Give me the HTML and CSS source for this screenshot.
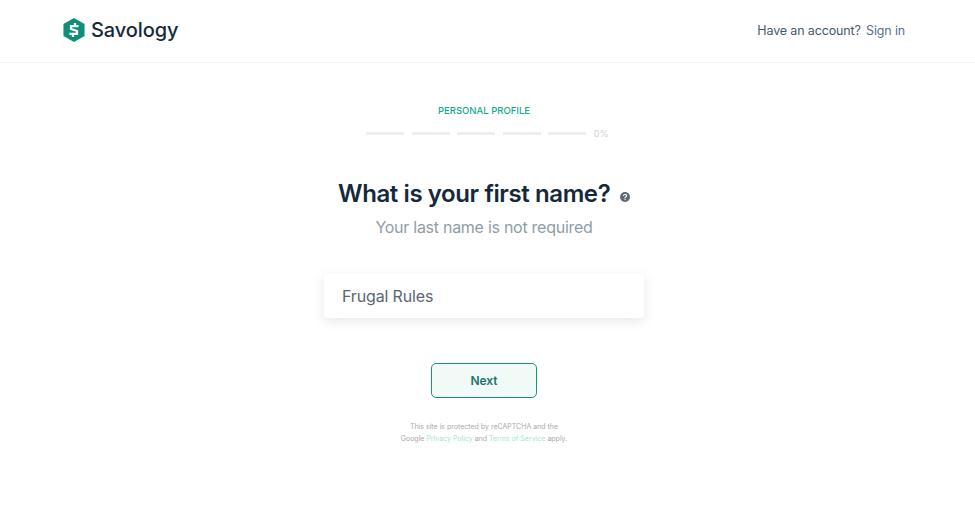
FILE: index.html
```html
<!DOCTYPE html>
<html>
<head>
    <link rel="stylesheet" href="styles.css">
</head>
<body>
    <header class="topbar">
        <a class="brand" href="#">
            <svg class="brand-mark" width="22" height="24" viewBox="0 0 22 24">
                <path d="M11 0.8 L20.8 6.4 V17.6 L11 23.2 L1.2 17.6 V6.4 Z" fill="#0f8f77" stroke="#0f8f77" stroke-width="1.5" stroke-linejoin="round"></path>
                <path d="M15.6 8.2 H8 V11 L14 13 V15.8 H6.4" fill="none" stroke="#fff" stroke-width="2.2"></path>
                <path d="M12 5 V7.5 M10 16.5 V19" fill="none" stroke="#fff" stroke-width="2.2"></path>
            </svg>
            <span class="brand-name">Savology</span>
        </a>
        <div class="account">Have an account? <a href="#">Sign in</a></div>
    </header>

    <main class="step">
        <div class="step-label">PERSONAL PROFILE</div>
        <div class="progress">
            <span class="progress-seg"></span>
            <span class="progress-seg"></span>
            <span class="progress-seg"></span>
            <span class="progress-seg"></span>
            <span class="progress-seg"></span>
            <span class="progress-pct">0%</span>
        </div>

        <h1 class="question">What is your first name?
            <svg class="help" width="10" height="10" viewBox="0 0 10 10">
                <circle cx="5" cy="5" r="5" fill="#5f6b76"></circle>
                <path d="M3.4 3.9 Q3.5 2.5 5 2.5 Q6.6 2.5 6.6 3.7 Q6.6 4.5 5.7 4.9 Q5 5.2 5 6" fill="none" stroke="#fff" stroke-width="1.1"></path>
                <rect x="4.4" y="6.7" width="1.2" height="1.2" fill="#fff"></rect>
            </svg>
        </h1>
        <p class="hint">Your last name is not required</p>

        <input class="name-input" type="text" value="Frugal Rules">

        <button class="next" type="button">Next</button>

        <p class="legal">This site is protected by reCAPTCHA and the<br>Google <a href="#">Privacy Policy</a> and <a href="#">Terms of Service</a> apply.</p>
    </main>
</body>
</html>
```

FILE: styles.css
```css
body {
    margin: 0;
    background: #fff;
    color: #15293a;
    font-family: "Inter", "Liberation Sans", sans-serif;
}

a {
    text-decoration: none;
}

.topbar {
    height: 60px;
    display: flex;
    align-items: center;
    justify-content: space-between;
    padding: 0 70px 2px 63px;
    border-bottom: 1px solid #f3f4f5;
}

.brand {
    display: flex;
    align-items: center;
    gap: 6px;
}

.brand-name {
    font-size: 20px;
    font-weight: 500;
    letter-spacing: -0.1px;
    color: #15293a;
}

.account {
    font-size: 12.5px;
    letter-spacing: -0.15px;
    color: #47586a;
}

.account a {
    color: #5a6f8a;
    margin-left: 2px;
}

.step {
    display: flex;
    flex-direction: column;
    align-items: center;
    padding: 42px 7px 0 0;
}

.step-label {
    font-size: 9.5px;
    line-height: 12px;
    font-weight: 500;
    color: #12ab90;
}

.progress {
    display: flex;
    align-items: center;
    gap: 7.5px;
    margin-top: 11px;
    margin-left: 7px;
}

.progress-seg {
    width: 38px;
    height: 3px;
    background: #eceef0;
}

.progress-pct {
    font-size: 9.5px;
    color: #cfd5d9;
}

.question {
    margin: 40px 0 0;
    font-size: 24px;
    line-height: 30px;
    font-weight: 600;
    letter-spacing: -0.4px;
    color: #15293a;
}

.help {
    margin-left: 4px;
}

.hint {
    margin: 6px 0 0;
    font-size: 16px;
    line-height: 24px;
    letter-spacing: -0.27px;
    color: #8f9da6;
}

.name-input {
    box-sizing: border-box;
    width: 320px;
    height: 44px;
    margin-top: 35px;
    padding: 0 18px;
    border: none;
    outline: none;
    border-radius: 3px;
    font-family: inherit;
    font-size: 16px;
    letter-spacing: -0.15px;
    color: #5a6672;
    box-shadow: 0 3px 12px rgba(30, 50, 80, 0.11);
}

.next {
    width: 106px;
    height: 35px;
    margin-top: 45px;
    border: 1px solid #17947c;
    border-radius: 5px;
    background: #f0faf6;
    font-family: inherit;
    font-size: 12px;
    font-weight: 600;
    color: #1f7270;
}

.legal {
    margin: 23px 0 0;
    font-size: 7px;
    line-height: 11.5px;
    text-align: center;
    color: #a9a9a9;
}

.legal a {
    color: #a6e3d4;
}
```
